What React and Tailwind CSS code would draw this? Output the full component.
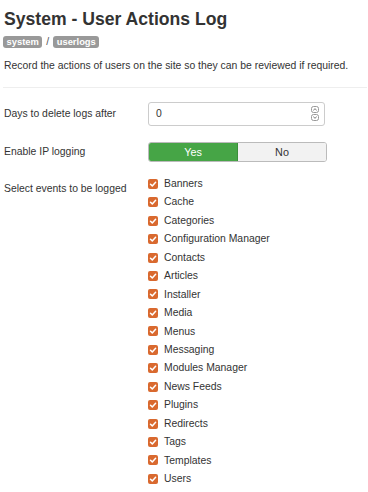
const events = [
  'Banners',
  'Cache',
  'Categories',
  'Configuration Manager',
  'Contacts',
  'Articles',
  'Installer',
  'Media',
  'Menus',
  'Messaging',
  'Modules Manager',
  'News Feeds',
  'Plugins',
  'Redirects',
  'Tags',
  'Templates',
  'Users',
];

function Check({ label }) {
  return (
    <label className="flex items-center h-[18.45px] gap-[6px]">
      <span className="flex items-center justify-center w-[10px] h-[10px] rounded-[2px] bg-[#d9692f]">
        <svg width="8" height="8" viewBox="0 0 8 8">
          <path d="M1.5 4.2 L3.3 5.9 L6.6 2.3" fill="none" stroke="#fff" strokeWidth="1.5" strokeLinecap="round" strokeLinejoin="round" />
        </svg>
      </span>
      <span>{label}</span>
    </label>
  );
}

export default function App() {
  return (
    <div className="w-[368px] h-[492px] bg-white text-[#333] text-[10.4px] px-[4px] pt-[8px] overflow-hidden" style={{ fontFamily: '"Liberation Sans", Arial, sans-serif' }}>
      <h2 className="text-[17.6px] font-bold leading-[22px] text-[#333]">System - User Actions Log</h2>
      <div className="flex items-center gap-[4px] mt-[4px] -ml-[1px]">
        <span className="bg-[#999] text-white font-bold text-[9.4px] leading-[12px] px-[3.5px] rounded-[3px]">system</span>
        <span className="text-[#555]">/</span>
        <span className="bg-[#999] text-white font-bold text-[9.4px] leading-[12px] px-[3.5px] rounded-[3px]">userlogs</span>
      </div>
      <p className="mt-[9px] leading-[14px]">Record the actions of users on the site so they can be reviewed if required.</p>
      <div className="border-t border-[#eee] mt-[14px] -mr-[3px] -ml-[1px]" />

      <div className="flex items-center mt-[14px]">
        <div className="w-[144px]">Days to delete logs after</div>
        <div className="flex items-center justify-between w-[177px] h-[24px] border border-[#ccc] rounded-[3px] pl-[7px] pr-[5px]">
          <span>0</span>
          <span className="flex flex-col gap-[1px]">
            <svg width="8" height="7" viewBox="0 0 8 7"><rect x="0.5" y="0.5" width="7" height="6" rx="2" fill="#fff" stroke="#999" /><path d="M2.3 4.3 L4 2.7 L5.7 4.3" fill="none" stroke="#666" strokeWidth="0.9" /></svg>
            <svg width="8" height="7" viewBox="0 0 8 7"><rect x="0.5" y="0.5" width="7" height="6" rx="2" fill="#fff" stroke="#999" /><path d="M2.3 2.7 L4 4.3 L5.7 2.7" fill="none" stroke="#666" strokeWidth="0.9" /></svg>
          </span>
        </div>
      </div>

      <div className="flex items-center mt-[16px]">
        <div className="w-[144px]">Enable IP logging</div>
        <div className="flex w-[179px] h-[20px] rounded-[3px] overflow-hidden border border-[#bbb]">
          <div className="w-[89px] bg-[#46a546] text-white flex items-center justify-center text-[10.8px] border-r border-[#3a8f3a]">Yes</div>
          <div className="flex-1 bg-[#f2f2f2] flex items-center justify-center text-[10.8px] text-[#333]">No</div>
        </div>
      </div>

      <div className="flex mt-[13px]">
        <div className="w-[144px] pt-[6px]">Select events to be logged</div>
        <div className="flex flex-col">
          {events.map((e) => (
            <Check key={e} label={e} />
          ))}
        </div>
      </div>
    </div>
  );
}
